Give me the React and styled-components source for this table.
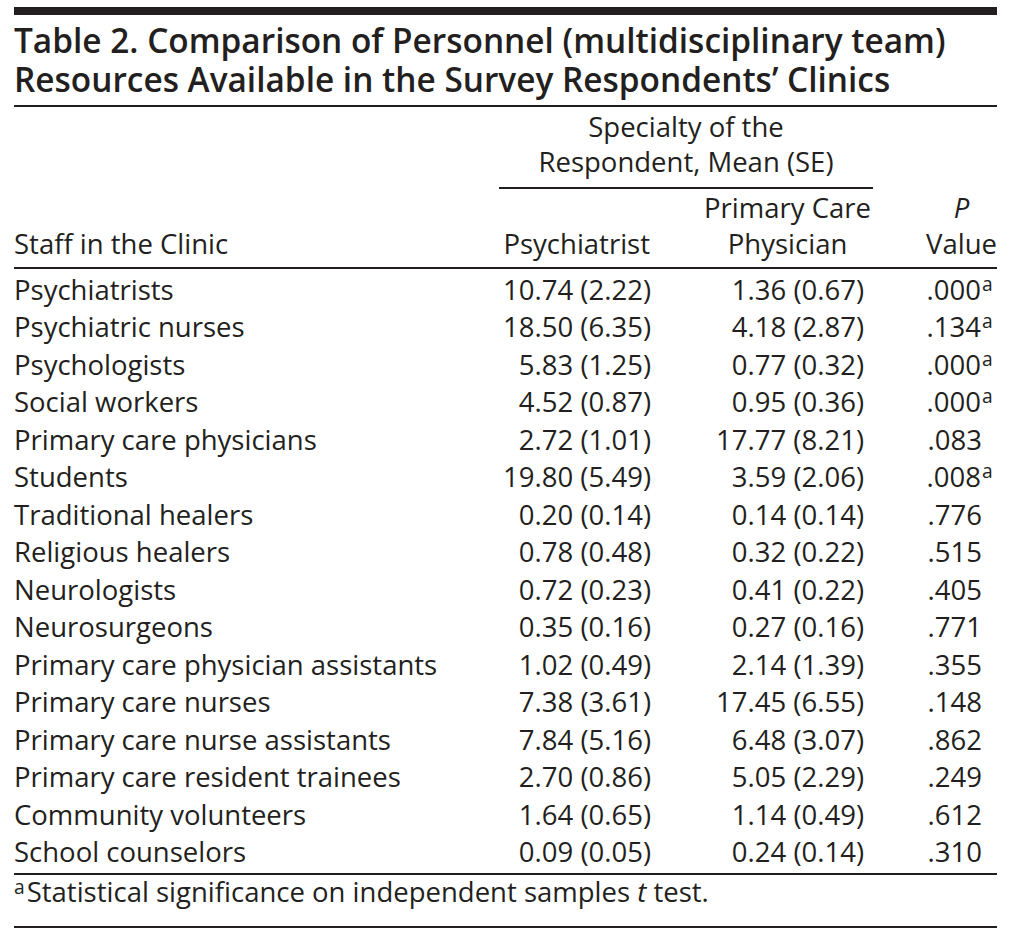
import React from "react";
import styled, { createGlobalStyle } from "styled-components";

const INK = "#231f20";
const COLS = "485px 161px 213px 124px";

const GlobalStyle = createGlobalStyle`
  html, body { margin: 0; padding: 0; background: #ffffff; }
  body {
    font-family: "Open Sans", "Noto Sans", "Liberation Sans", sans-serif;
    color: ${INK};
  }
`;

const Page = styled.div`
  width: 983px;
  padding: 7px 0 0 14px;
`;

const TopBar = styled.div`
  height: 8px;
  background: ${INK};
`;

const Title = styled.h1`
  margin: 5.5px 0 0;
  padding-bottom: 6.5px;
  border-bottom: 2px solid ${INK};
  font-size: 33.4px;
  font-weight: 600;
  line-height: 39px;
`;

const TitleLine = styled.span`
  display: block;
  height: 39px;
`;

const Head = styled.div`
  display: grid;
  grid-template-columns: ${COLS};
  grid-template-rows: auto auto;
  font-size: 27.5px;
  padding-bottom: 4.7px;
  border-bottom: 2px solid ${INK};
`;

const Spanner = styled.div`
  grid-column: 2 / 4;
  grid-row: 1;
  text-align: center;
  line-height: 35px;
  padding: 1.8px 0 8.2px;
  border-bottom: 2px solid ${INK};
`;

const HeadCell = styled.div`
  grid-column: ${(p) => p.$col};
  grid-row: ${(p) => p.$row};
  align-self: end;
  justify-self: ${(p) => p.$justify || "start"};
  text-align: ${(p) => p.$align || "left"};
  line-height: 36px;
  padding-right: ${(p) => p.$pr || 0}px;
  margin-top: ${(p) => (p.$row === "2" ? "1.3px" : "0")};
`;

const Body = styled.div`
  padding: 1.6px 0 2.4px;
  border-bottom: 2px solid ${INK};
`;

const Row = styled.div`
  display: grid;
  grid-template-columns: ${COLS};
  font-size: 27.5px;
  line-height: 37.5px;
  white-space: nowrap;
`;

const Label = styled.div``;

const Num = styled.div`
  text-align: right;
  padding-right: ${(p) => p.$pr}px;
`;

const Sup = styled.sup`
  font-size: 0.7em;
  line-height: 0;
  vertical-align: 0.45em;
  margin-right: 2px;
`;

const HangSup = styled(Sup)`
  display: inline-block;
  width: 0;
  margin: 0 0 0 1px;
`;

const Footnote = styled.p`
  margin: 0;
  padding: 2.3px 0 19px;
  border-bottom: 2px solid ${INK};
  font-size: 27.5px;
  line-height: 30px;
`;

const rows = [
  ["Psychiatrists", "10.74 (2.22)", "1.36 (0.67)", ".000", true],
  ["Psychiatric nurses", "18.50 (6.35)", "4.18 (2.87)", ".134", true],
  ["Psychologists", "5.83 (1.25)", "0.77 (0.32)", ".000", true],
  ["Social workers", "4.52 (0.87)", "0.95 (0.36)", ".000", true],
  ["Primary care physicians", "2.72 (1.01)", "17.77 (8.21)", ".083", false],
  ["Students", "19.80 (5.49)", "3.59 (2.06)", ".008", true],
  ["Traditional healers", "0.20 (0.14)", "0.14 (0.14)", ".776", false],
  ["Religious healers", "0.78 (0.48)", "0.32 (0.22)", ".515", false],
  ["Neurologists", "0.72 (0.23)", "0.41 (0.22)", ".405", false],
  ["Neurosurgeons", "0.35 (0.16)", "0.27 (0.16)", ".771", false],
  ["Primary care physician assistants", "1.02 (0.49)", "2.14 (1.39)", ".355", false],
  ["Primary care nurses", "7.38 (3.61)", "17.45 (6.55)", ".148", false],
  ["Primary care nurse assistants", "7.84 (5.16)", "6.48 (3.07)", ".862", false],
  ["Primary care resident trainees", "2.70 (0.86)", "5.05 (2.29)", ".249", false],
  ["Community volunteers", "1.64 (0.65)", "1.14 (0.49)", ".612", false],
  ["School counselors", "0.09 (0.05)", "0.24 (0.14)", ".310", false],
];

export default function App() {
  return (
    <>
      <GlobalStyle />
      <Page>
        <TopBar />
        <Title>
          <TitleLine>Table 2. Comparison of Personnel (multidisciplinary team)</TitleLine>
          <TitleLine>Resources Available in the Survey Respondents’ Clinics</TitleLine>
        </Title>
        <Head>
          <HeadCell $col="1" $row="1 / 3">Staff in the Clinic</HeadCell>
          <Spanner>
            Specialty of the
            <br />
            Respondent, Mean (SE)
          </Spanner>
          <HeadCell $col="2" $row="2" $justify="end" $pr={10}>
            Psychiatrist
          </HeadCell>
          <HeadCell $col="3" $row="2" $justify="end" $align="center" $pr={2}>
            Primary Care
            <br />
            Physician
          </HeadCell>
          <HeadCell $col="4" $row="1 / 3" $justify="end" $align="center">
            <i>P</i>
            <br />
            Value
          </HeadCell>
        </Head>
        <Body>
          {rows.map(([label, a, b, p, sig]) => (
            <Row key={label}>
              <Label>{label}</Label>
              <Num $pr={9}>{a}</Num>
              <Num $pr={9}>{b}</Num>
              <Num $pr={15}>
                {p}
                {sig && <HangSup>a</HangSup>}
              </Num>
            </Row>
          ))}
        </Body>
        <Footnote>
          <Sup>a</Sup>Statistical significance on independent samples <i>t</i> test.
        </Footnote>
      </Page>
    </>
  );
}
